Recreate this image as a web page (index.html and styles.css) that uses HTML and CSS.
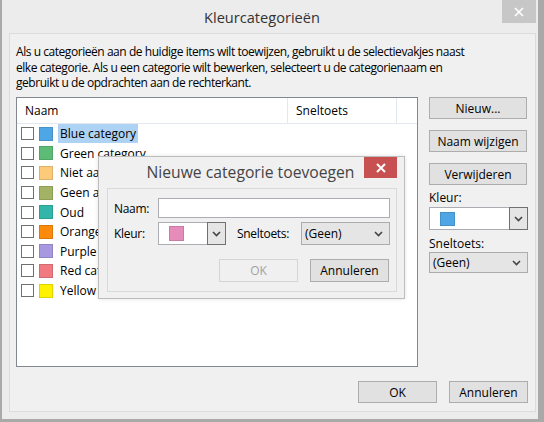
FILE: index.html
```html
<!DOCTYPE html>
<html lang="nl">
<head>
  <meta charset="UTF-8">
  <title>Kleurcategorieën</title>
  <link rel="stylesheet" href="styles.css">
</head>
<body>
  <div class="window">
    <div class="titlebar">
      <span class="title">Kleurcategorieën</span>
      <span class="close">
        <svg width="10" height="10" viewBox="0 0 10 10"><path d="M1 1L9 9M9 1L1 9" stroke="#fff" stroke-width="1.6"/></svg>
      </span>
    </div>

    <div class="panel">
      <p class="intro">Als u categorieën aan de huidige items wilt toewijzen, gebruikt u de selectievakjes naast<br>elke categorie. Als u een categorie wilt bewerken, selecteert u de categorienaam en<br>gebruikt u de opdrachten aan de rechterkant.</p>

      <div class="main">
        <div class="list">
          <div class="list-head">
            <span class="col col-name">Naam</span>
            <span class="col col-key">Sneltoets</span>
            <span class="col col-rest"></span>
          </div>
          <ul class="rows">
            <li class="row"><span class="check"></span><span class="swatch c-blue"></span><span class="label selected">Blue category</span></li>
            <li class="row"><span class="check"></span><span class="swatch c-green"></span><span class="label">Green category</span></li>
            <li class="row"><span class="check"></span><span class="swatch c-peach"></span><span class="label">Niet aan</span></li>
            <li class="row"><span class="check"></span><span class="swatch c-olive"></span><span class="label">Geen aan</span></li>
            <li class="row"><span class="check"></span><span class="swatch c-teal"></span><span class="label">Oud</span></li>
            <li class="row"><span class="check"></span><span class="swatch c-orange"></span><span class="label">Orange category</span></li>
            <li class="row"><span class="check"></span><span class="swatch c-purple"></span><span class="label">Purple category</span></li>
            <li class="row"><span class="check"></span><span class="swatch c-red"></span><span class="label">Red category</span></li>
            <li class="row"><span class="check"></span><span class="swatch c-yellow"></span><span class="label">Yellow category</span></li>
          </ul>
        </div>

        <div class="side">
          <button class="btn">Nieuw...</button>
          <button class="btn">Naam wijzigen</button>
          <button class="btn">Verwijderen</button>
          <span class="side-label">Kleur:</span>
          <div class="combo">
            <span class="combo-value"><span class="swatch c-blue"></span></span>
            <span class="combo-arrow">
              <svg width="9" height="6" viewBox="0 0 9 6"><path d="M1 1L4.5 4.5L8 1" fill="none" stroke="#444" stroke-width="1.6"/></svg>
            </span>
          </div>
          <span class="side-label">Sneltoets:</span>
          <div class="select">
            <span>(Geen)</span>
            <svg width="9" height="6" viewBox="0 0 9 6"><path d="M1 1L4.5 4.5L8 1" fill="none" stroke="#444" stroke-width="1.6"/></svg>
          </div>
        </div>
      </div>

      <div class="actions">
        <button class="btn btn-wide">OK</button>
        <button class="btn btn-wide">Annuleren</button>
      </div>
    </div>

    <div class="dialog">
      <div class="dialog-titlebar">
        <span class="dialog-title">Nieuwe categorie toevoegen</span>
        <span class="dialog-close">
          <svg width="10" height="10" viewBox="0 0 10 10"><path d="M1 1L9 9M9 1L1 9" stroke="#fff" stroke-width="2"/></svg>
        </span>
      </div>
      <div class="dialog-panel">
        <div class="field">
          <span class="field-label">Naam:</span>
          <span class="input"></span>
        </div>
        <div class="field field-color">
          <span class="field-label">Kleur:</span>
          <div class="combo combo-small">
            <span class="combo-value"><span class="swatch c-pink"></span></span>
            <span class="combo-arrow">
              <svg width="9" height="6" viewBox="0 0 9 6"><path d="M1 1L4.5 4.5L8 1" fill="none" stroke="#444" stroke-width="1.6"/></svg>
            </span>
          </div>
          <span class="key-label">Sneltoets:</span>
          <div class="select select-small">
            <span>(Geen)</span>
            <svg width="9" height="6" viewBox="0 0 9 6"><path d="M1 1L4.5 4.5L8 1" fill="none" stroke="#444" stroke-width="1.6"/></svg>
          </div>
        </div>
        <div class="dialog-actions">
          <button class="btn btn-dialog" disabled>OK</button>
          <button class="btn btn-dialog">Annuleren</button>
        </div>
      </div>
    </div>
  </div>
</body>
</html>
```

FILE: styles.css
```css
* {
	box-sizing: border-box;
}
body {
	margin: 0;
	background: #a9a9a9;
	font-family: "Open Sans", "Noto Sans", sans-serif;
	font-size: 12px;
	color: #000;
}
.window {
	position: relative;
	margin-left: 2px;
	width: 536px;
	height: 419px;
	background: #ececec;
	display: flex;
	flex-direction: column;
}

/* title bar */
.titlebar {
	position: relative;
	height: 33px;
	padding-right: 16px;
	display: flex;
	align-items: center;
	justify-content: center;
}
.title {
	font-size: 14.6px;
	color: #333;
	margin-top: 1px;
}
.close {
	position: absolute;
	top: 0;
	right: 2px;
	width: 34px;
	height: 23px;
	background: #c7c7c7;
	display: flex;
	align-items: center;
	justify-content: center;
}

/* main panel */
.panel {
	flex: 1;
	margin: 0 2px 7px 7px;
	border: 1px solid #dcdcdc;
	background: #f0f0f0;
	padding: 10px 7px 8px 6px;
	display: flex;
	flex-direction: column;
}
.intro {
	margin: 0;
	line-height: 15.5px;
	letter-spacing: -0.45px;
}
.main {
	margin-top: 6.5px;
	display: flex;
	gap: 11px;
}
.list {
	width: 402px;
	height: 270px;
	border: 1px solid #828790;
	background: #fff;
}
.list-head {
	height: 26px;
	display: flex;
	border-bottom: 1px solid #e3e8ef;
}
.col {
	display: flex;
	align-items: center;
	padding-left: 8px;
}
.col-name {
	width: 271px;
	border-right: 1px solid #e3e8ef;
}
.col-key {
	width: 109px;
	border-right: 1px solid #e3e8ef;
}
.rows {
	list-style: none;
	margin: 0;
	padding: 0;
}
.row {
	height: 19.6px;
	display: flex;
	align-items: center;
	padding-left: 4px;
}
.check {
	width: 13px;
	height: 13px;
	border: 1px solid #707070;
	background: #fff;
}
.swatch {
	display: block;
	width: 14px;
	height: 14px;
	margin-left: 5px;
	border: 1px solid rgba(0, 0, 0, 0.12);
}
.label {
	margin-left: 5px;
	padding: 0 2px;
	line-height: 19px;
}
.label.selected {
	background: #aed2f3;
}
.c-blue { background: #4fa6e4; }
.c-green { background: #5cbb74; }
.c-peach { background: #fdca7a; }
.c-olive { background: #a2b464; }
.c-teal { background: #32b6a9; }
.c-orange { background: #fd8a0b; }
.c-purple { background: #a898e0; }
.c-red { background: #f07982; }
.c-yellow { background: #fff200; }
.c-pink { background: #e58cba; }

/* side buttons */
.side {
	width: 99px;
	display: flex;
	flex-direction: column;
}
.btn {
	font: inherit;
	color: #000;
	height: 22px;
	padding: 0;
	background: #e1e1e1;
	border: 1px solid #adadad;
}
.side .btn {
	width: 98px;
	margin-bottom: 11px;
}
.side-label {
	line-height: 16px;
	margin-top: -6px;
}
.side-label + .combo {
	margin-top: 1px;
}
.combo {
	height: 23px;
	display: flex;
	background: #fff;
	border: 1px solid #abadb3;
}
.combo-value {
	flex: 1;
	display: flex;
	align-items: center;
	padding-left: 5px;
}
.combo .swatch {
	width: 15px;
	height: 14px;
}
.combo-arrow {
	width: 19px;
	margin: -1px -1px -1px 0;
	border: 1px solid #707070;
	background: #e5e5e5;
	display: flex;
	align-items: center;
	justify-content: center;
}
.combo + .side-label {
	margin-top: 6px;
}
.select {
	height: 21px;
	display: flex;
	align-items: center;
	justify-content: space-between;
	padding: 0 6px 0 3px;
	background: #e5e5e5;
	border: 1px solid #acacac;
}

/* bottom */
.actions {
	margin-top: 14px;
	display: flex;
	justify-content: flex-end;
	gap: 12px;
}
.btn-wide {
	width: 79px;
}

/* nieuwe categorie dialog */
.dialog {
	position: absolute;
	left: 96px;
	top: 156px;
	width: 307px;
	height: 143px;
	background: #f0f0f0;
	border: 1px solid #bdbdbd;
	box-shadow: 0 0 4px rgba(0, 0, 0, 0.12);
}
.dialog-titlebar {
	position: relative;
	height: 31px;
	display: flex;
	align-items: center;
	justify-content: center;
}
.dialog-title {
	font-size: 15.7px;
	color: #444;
	margin-top: -1px;
	margin-right: 2px;
}
.dialog-close {
	position: absolute;
	top: 0;
	right: 7px;
	width: 33px;
	height: 21px;
	background: #c75050;
	display: flex;
	align-items: center;
	justify-content: center;
}
.dialog-panel {
	margin: 0 7px 0 8px;
	height: 104px;
	border: 1px solid #d9d9d9;
	padding: 9px 6px 0 6px;
	display: flex;
	flex-direction: column;
}
.field {
	display: flex;
	align-items: center;
}
.field-label {
	width: 44px;
	letter-spacing: -0.3px;
}
.input {
	flex: 1;
	height: 20px;
	background: #fff;
	border: 1px solid #abadb3;
}
.field-color {
	margin-top: 4px;
}
.combo-small {
	width: 68px;
}
.combo-small .combo-value {
	padding-left: 10px;
}
.combo-small .swatch {
	width: 15px;
	height: 15px;
	margin-left: 0;
}
.key-label {
	margin-left: 11px;
	letter-spacing: -0.3px;
}
.select-small {
	width: 89px;
	height: 23px;
	margin-left: auto;
}
.dialog-actions {
	margin-top: 14px;
	margin-right: 1px;
	display: flex;
	justify-content: flex-end;
	gap: 12px;
}
.btn-dialog {
	width: 79px;
	height: 23px;
}
.btn-dialog:disabled {
	background: #f0f0f0;
	border-color: #d5d5d5;
	color: #a3a3a3;
}
```
